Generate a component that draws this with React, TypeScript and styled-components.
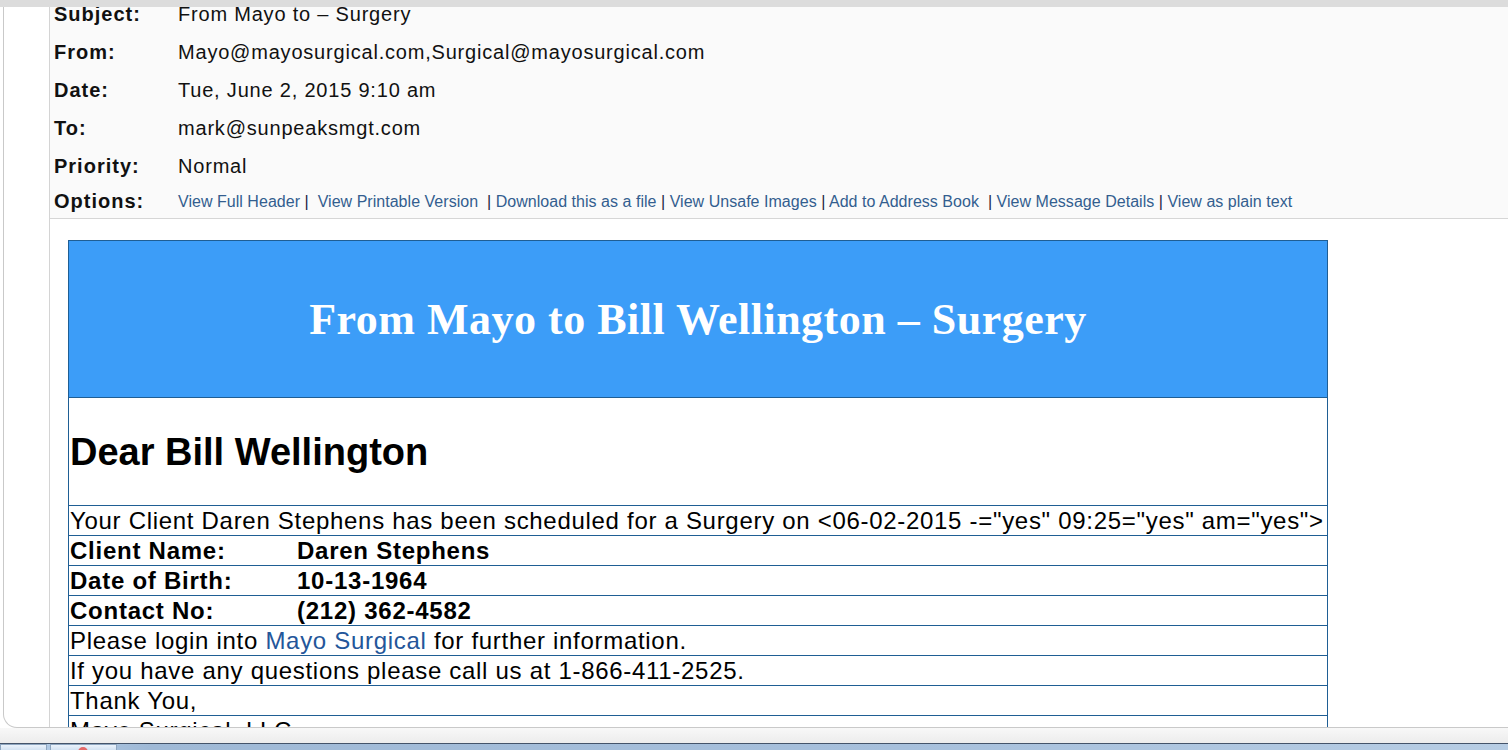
import styled, { createGlobalStyle } from 'styled-components';

const GlobalStyle = createGlobalStyle`
    html, body {
        margin: 0;
        padding: 0;
        background: #ffffff;
        font-family: 'Liberation Sans', Arial, sans-serif;
    }
`;

interface IHeaderField {
    label: string;
    value: string;
}

const headerFields: IHeaderField[] = [
    { label: 'Subject:', value: 'From Mayo to \u2013 Surgery' },
    { label: 'From:', value: 'Mayo@mayosurgical.com,Surgical@mayosurgical.com' },
    { label: 'Date:', value: 'Tue, June 2, 2015 9:10 am' },
    { label: 'To:', value: 'mark@sunpeaksmgt.com' },
    { label: 'Priority:', value: 'Normal' },
];

// each link is followed by the separator text as it appears on the page
const options: [string, string][] = [
    ['View Full Header', ' |  '],
    ['View Printable Version', '  | '],
    ['Download this as a file', ' | '],
    ['View Unsafe Images', ' | '],
    ['Add to Address Book', '  | '],
    ['View Message Details', ' | '],
    ['View as plain text', ''],
];

const clientFields: IHeaderField[] = [
    { label: 'Client Name:', value: 'Daren Stephens' },
    { label: 'Date of Birth:', value: '10-13-1964' },
    { label: 'Contact No:', value: '(212) 362-4582' },
];

export default function App() {
    return (
        <>
            <GlobalStyle />
            <Screen>
                <TopStrip />
                <Window>
                    <Gutter />
                    <Main>
                        <HeaderPanel>
                            {headerFields.map((field, index) => (
                                <HeaderRow key={index}>
                                    <HeaderLabel>{field.label}</HeaderLabel>
                                    <HeaderValue>{field.value}</HeaderValue>
                                </HeaderRow>
                            ))}
                            <OptionsRow>
                                <HeaderLabel>Options:</HeaderLabel>
                                <OptionLinks>
                                    {options.map(([text, sep], index) => (
                                        <span key={index}>
                                            <OptionLink href="#">{text}</OptionLink>
                                            <Separator>{sep}</Separator>
                                        </span>
                                    ))}
                                </OptionLinks>
                            </OptionsRow>
                        </HeaderPanel>
                        <MessageBody>
                            <Letter>
                                <Banner>
                                    <BannerTitle>
                                        From Mayo to Bill Wellington &ndash; Surgery
                                    </BannerTitle>
                                </Banner>
                                <GreetingRow>
                                    <Greeting>Dear Bill Wellington</Greeting>
                                </GreetingRow>
                                <LineRow>
                                    Your Client Daren Stephens has been scheduled for a Surgery on
                                    {' <06-02-2015 -="yes" 09:25="yes" am="yes">'}
                                </LineRow>
                                {clientFields.map((field, index) => (
                                    <LineRow key={index} $bold>
                                        <FieldLabel>{field.label}</FieldLabel>
                                        <span>{field.value}</span>
                                    </LineRow>
                                ))}
                                <LineRow>
                                    Please login into <BodyLink href="#">Mayo Surgical</BodyLink> for
                                    further information.
                                </LineRow>
                                <LineRow>
                                    If you have any questions please call us at 1-866-411-2525.
                                </LineRow>
                                <LineRow>Thank You,</LineRow>
                                <LineRow>Mayo Surgical, LLC</LineRow>
                            </Letter>
                        </MessageBody>
                    </Main>
                </Window>
                <BottomGap />
                <Taskbar>
                    <TaskButton $width={47} />
                    <TaskButton $width={67}>
                        <TaskIcon />
                    </TaskButton>
                </Taskbar>
            </Screen>
        </>
    );
}

const Screen = styled.div`
    width: 1508px;
    height: 750px;
    overflow: hidden;
    display: flex;
    flex-direction: column;
    background: #ffffff;
`;

const TopStrip = styled.div`
    height: 7px;
    flex: none;
    background: #dcdcdc;
`;

const Window = styled.div`
    flex: none;
    height: 721px;
    box-sizing: border-box;
    margin-left: 3px;
    display: flex;
    background: #ffffff;
    border-left: 1px solid #c9c9c9;
    border-bottom: 1px solid #c9c9c9;
    border-bottom-left-radius: 14px;
    overflow: hidden;
`;

const Gutter = styled.div`
    width: 45px;
    flex: none;
`;

const Main = styled.div`
    flex: 1;
    border-left: 1px solid #d4d4d4;
    overflow: hidden;
`;

const HeaderPanel = styled.div`
    background: #fafafa;
    border-bottom: 1px solid #d6d6d6;
    height: 211px;
    overflow: hidden;
`;

const HeaderRow = styled.div`
    display: flex;
    align-items: center;
    height: 38px;
    padding-left: 4px;
    &:first-child {
        margin-top: -12px;
    }
`;

const OptionsRow = styled(HeaderRow)`
    height: 33px;
`;

const HeaderLabel = styled.div`
    width: 124px;
    flex: none;
    font-size: 20px;
    font-weight: 700;
    letter-spacing: 1px;
    color: #111111;
`;

const HeaderValue = styled.div`
    font-size: 20px;
    letter-spacing: 0.8px;
    color: #111111;
`;

const OptionLinks = styled.div`
    font-size: 16px;
    letter-spacing: 0.03px;
    white-space: pre;
`;

const OptionLink = styled.a`
    color: #335e8f;
    text-decoration: none;
`;

const Separator = styled.span`
    color: #1c2340;
`;

const MessageBody = styled.div`
    padding: 21px 0 0 18px;
`;

const Letter = styled.div`
    width: 1260px;
    box-sizing: border-box;
    border: 1px solid #1f5e94;
    color: #000000;
`;

const Banner = styled.div`
    height: 156px;
    background: #3c9df8;
    display: flex;
    align-items: center;
    justify-content: center;
`;

const BannerTitle = styled.h1`
    margin: 0;
    font-family: 'Liberation Serif', 'Times New Roman', serif;
    font-size: 44px;
    font-weight: 700;
    letter-spacing: 0.5px;
    color: #ffffff;
`;

const GreetingRow = styled.div`
    height: 107px;
    border-top: 1px solid #1f5e94;
    display: flex;
    align-items: center;
    padding: 0 1px;
`;

const Greeting = styled.h2`
    margin: 0;
    font-size: 38px;
    font-weight: 700;
    transform: translateY(1px);
`;

const LineRow = styled.div<{ $bold?: boolean }>`
    height: 29px;
    border-top: 1px solid #1f5e94;
    display: flex;
    align-items: center;
    padding: 0 1px;
    font-size: 24px;
    font-weight: ${(p) => (p.$bold ? 700 : 400)};
    letter-spacing: ${(p) => (p.$bold ? '0.75px' : '0.7px')};
    white-space: pre;
`;

const FieldLabel = styled.span`
    width: 227px;
    flex: none;
`;

const BodyLink = styled.a`
    color: #24569a;
    text-decoration: none;
`;

const BottomGap = styled.div`
    height: 15px;
    flex: none;
    background: linear-gradient(#f8f8f8, #ececec);
`;

const Taskbar = styled.div`
    flex: 1;
    display: flex;
    gap: 3px;
    border-top: 1px solid #44546a;
    background: linear-gradient(90deg, #b9d2ec 0%, #9fb9d6 10%, #a7c0dc 60%, #b7cde4 100%);
`;

const TaskButton = styled.div<{ $width: number }>`
    width: ${(p) => p.$width}px;
    position: relative;
    box-sizing: border-box;
    border: 1px solid #8ea6c0;
    border-bottom: none;
    background: linear-gradient(#eaf2fb, #d3e2f2);
`;

const TaskIcon = styled.div`
    position: absolute;
    left: 27px;
    top: 2px;
    width: 10px;
    height: 10px;
    border-radius: 50%;
    background: #e36a6a;
`;
